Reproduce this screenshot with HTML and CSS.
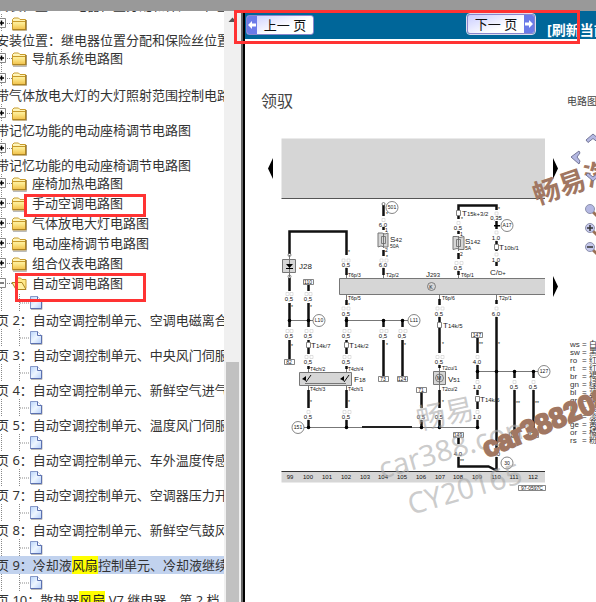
FILE: index.html
```
<!DOCTYPE html>
<html lang="zh-CN">
<head>
<meta charset="utf-8">
<title>电路图</title>
<link rel="stylesheet" href="styles.css">
</head>
<body>
<svg class="defs" aria-hidden="true">
  <defs>
    <linearGradient id="gold" x1="0" y1="0" x2="0" y2="1"><stop offset="0" stop-color="#fffbd0"/><stop offset=".5" stop-color="#fde98c"/><stop offset="1" stop-color="#f0c04a"/></linearGradient>
    <linearGradient id="paper" x1="0" y1="0" x2="1" y2="1"><stop offset="0" stop-color="#b8d4fb"/><stop offset=".5" stop-color="#eef6ff"/><stop offset="1" stop-color="#b4cffa"/></linearGradient>
    <g id="folder"><path d="M13 17.5h13.5V6" fill="none" stroke="#bbb"/><path d="M12.5 15.5v-10l1.5-1.500h4.500l1.500 1.500h5.500v10z" fill="url(#gold)" stroke="#c79a2b"/><path d="M13 7.500h12" stroke="#c79a2b"/><path d="M12.500 16h13.500v-10" fill="none" stroke="#96701a"/></g>
    <g id="closed" ><path d="M1.500 0v20" class="dots"/><path d="M7 9.500h5" class="dots"/><path d="M-3.500 4.500h9v9h-9z" fill="#fff" stroke="#888"/><path d="M-1 9h5M1.500 6.500v5" stroke="#000" stroke-width="1.500"/><use href="#folder"/></g>
    <g id="open"><path d="M1.500 0v20" class="dots"/><path d="M7 9.500h5" class="dots"/><path d="M-3.500 4.500h9v9h-9z" fill="#fff" stroke="#888"/><path d="M-1 9h5" stroke="#000"/><path d="M15.500 14.500v-9l1-1.500h4l1.500 1.500h4v9z" fill="#ffe98a" stroke="#c79a2b"/><path d="M12 8.500h10l4 7h-10z" fill="#fff0a0" stroke="#ad8420"/></g>
    <g id="file"><path d="M1.500 0v17M19.500 0v17" class="dots"/><path d="M20 9h10" class="dots"/><path d="M31 15.500h11V6" fill="none" stroke="#bbb"/><path d="M30.500 2.500h7l4 4v8h-11z" fill="url(#paper)" stroke="#8799c8"/><path d="M37.500 2.500v4h4" fill="#fff" stroke="#5b70b0"/><path d="M30.500 14.500h11v-8" fill="none" stroke="#5b70b0"/></g>
  </defs>
</svg>
<div class="titlebar"></div>
<div class="frames">
  <nav class="tree">
    <ul>
      <li><a class="label" href="#">安装位置<span class="colon">：</span>继电器位置分配和保险丝位置</a></li>
      <li><svg class="node"><use href="#closed"/></svg><a class="label" href="#">安装位置<span class="colon">：</span>继电器位置分配和保险丝位置</a></li>
      <li class="inline"><svg><use href="#closed"/></svg><a href="#">导航系统电路图</a></li>
      <li><svg class="node"><use href="#closed"/></svg><a class="label" href="#">带气体放电大灯的大灯照射范围控制电路图</a></li>
      <li><svg class="node"><use href="#closed"/></svg><a class="label" href="#">带记忆功能的电动座椅调节电路图</a></li>
      <li><svg class="node"><use href="#closed"/></svg><a class="label" href="#">带记忆功能的电动座椅调节电路图</a></li>
      <li class="inline"><svg><use href="#closed"/></svg><a href="#">座椅加热电路图</a></li>
      <li class="inline"><svg><use href="#closed"/></svg><a href="#">手动空调电路图</a></li>
      <li class="inline"><svg><use href="#closed"/></svg><a href="#">气体放电大灯电路图</a></li>
      <li class="inline"><svg><use href="#closed"/></svg><a href="#">电动座椅调节电路图</a></li>
      <li class="inline"><svg><use href="#closed"/></svg><a href="#">组合仪表电路图</a></li>
      <li class="inline"><svg><use href="#open"/></svg><a href="#">自动空调电路图</a></li>
      <li><svg class="node"><use href="#file"/></svg><a class="label" href="#">页 2<span class="colon">：</span>自动空调控制单元、空调电磁离合器</a></li>
      <li><svg class="node"><use href="#file"/></svg><a class="label" href="#">页 3<span class="colon">：</span>自动空调控制单元、中央风门伺服电机</a></li>
      <li><svg class="node"><use href="#file"/></svg><a class="label" href="#">页 4<span class="colon">：</span>自动空调控制单元、新鲜空气进气</a></li>
      <li><svg class="node"><use href="#file"/></svg><a class="label" href="#">页 5<span class="colon">：</span>自动空调控制单元、温度风门伺服电机</a></li>
      <li><svg class="node"><use href="#file"/></svg><a class="label" href="#">页 6<span class="colon">：</span>自动空调控制单元、车外温度传感器</a></li>
      <li><svg class="node"><use href="#file"/></svg><a class="label" href="#">页 7<span class="colon">：</span>自动空调控制单元、空调器压力开关</a></li>
      <li><svg class="node"><use href="#file"/></svg><a class="label" href="#">页 8<span class="colon">：</span>自动空调控制单元、新鲜空气鼓风机</a></li>
      <li><svg class="node"><use href="#file"/></svg><a class="label current" href="#">页 9<span class="colon">：</span>冷却液<mark>风扇</mark>控制单元、冷却液继续</a></li>
      <li><svg class="node"><use href="#file"/></svg><a class="label" href="#">页 10<span class="colon">：</span>散热器<mark>风扇</mark> V7 继电器、第 2 档</a></li>
    </ul>
  </nav>
  <div class="scrollbar"><svg class="up" viewBox="0 0 16 11"><path d="M4.500 11l4-4.500 4 4.500z" fill="#555"/></svg><div class="thumb"></div></div>
  <div class="splitter"></div>
  <main class="viewer">
    <div class="toolbar">
      <button class="pager"><span class="arrow"><svg viewBox="0 0 10 18"><path d="M1 9l4-4v2.500h4v3H5V13z" fill="#fff"/></svg></span><span class="caption">上一 页</span></button>
      <button class="pager next"><span class="caption">下一 页</span><span class="arrow"><svg viewBox="0 0 10 18"><path d="M9 9L5 5v2.500H1v3h4V13z" fill="#fff"/></svg></span></button>
      <a class="refresh" href="#">[刷新当前页]</a>
    </div>
    <div class="sheet">
      <header class="heading"><h1>领驭</h1><span>电路图</span></header>
      <div class="content">
        <svg class="diagram" viewBox="265 115 300 420" role="img" aria-label="电路图">
          <path class="grey" d="M281.500 138.500h263.500v60h-263.500z"/>
          <path d="M281.500 198.500h263.500" stroke="#555"/>
          <path d="M273 158v21l-5-10.500zM553 158v21l5-10.500zM553 276v21l5-10.500z"/>
          <path class="grey edge" d="M545 278.500H339.500v16H545"/>
          <path class="grey edge" d="M282.500 259.500h13v13h-13zM299.500 372.500h52v13h-52zM433.500 371.500h12v13h-12zM378 233h4l3 1 3-1v14h-4l-3-1-3 1zM453 236.500h4l3 1 4-1v13h-4l-3-1-4 1z"/>
          <path class="thin" d="M289 320.500h24M346 320.500h62M304 427.500h173M477 371.500h61M289.500 255v22M383.500 233v15M458.500 236v15M439.500 366v24M346.500 275v4M383.500 275v4M458.500 275v4M346.500 294v6M439.500 294v6M496.500 294v6M308.500 369v4M346.500 369v4M308.500 385v6M346.500 385v6M305 383.500h41"/>
          <path d="M362 427h50" stroke="#222" stroke-width="2"/>
          <path class="wire" d="M289.500 254V231.500H346.500V255M289.500 278v13M308.500 285v6M346.500 268v7M289.500 303v24M308.500 303v24M289.500 340v19M308.500 340v2M308.500 348v6M308.500 366v3M308.500 390v18M308.500 420v7M346.500 300v5M346.500 317v10M346.500 340v2M346.500 348v6M346.500 366v3M346.500 390v18M346.500 420v7M383.500 205v11M383.500 227v3M383.500 250v6M383.500 268v7M383.500 320v7M402.500 320v7M383.500 340v36M402.500 340v36M421.500 392v16M421.500 420v7M439.500 299v6M439.500 317v5M439.500 328v25M439.500 365v3M439.500 390v18M439.500 420v7M458.500 210V205.500H496.500V210M458.500 216v3M458.500 231v3M458.500 253v6M458.500 271v4M496.500 221v8M496.500 241v3M496.500 249v2M496.500 262v4M496.500 300v4M496.500 317v133M496.500 457v13M477.500 338v15M477.500 365v14M477.500 390v5M477.500 402v7M477.500 420v7M514.500 371v7M533.500 371v7M514.500 390v41M533.500 390v41M458.500 438v6M458.500 457v9.500h30l8 4"/>
          <g class="boxes"><path d="M303.500 279.500h10v5h-10zM284.500 359.500h10v5h-10zM378.500 376.500h10v5h-10zM397.500 376.500h10v5h-10zM416.500 387.500h10v5h-10zM471.500 332.500h11v5h-11zM453.500 432.500h10v5h-10zM509.500 432.500h10v5h-10zM528.500 432.500h10v5h-10zM518.500 485.500h27v5h-27zM306.500 342.500h4v5h-4zM344.500 342.500h4v5h-4zM437.500 322.500h4v5h-4zM456.500 210.500h4v5h-4zM494.500 244.500h4v5h-4zM475.500 396.500h4v5h-4zM381.500 236.500h4v7h-4zM456.500 239.500h4v7h-4z"/>
            <circle cx="392" cy="207.500" r="6"/><circle cx="319" cy="320.500" r="6"/><circle cx="414" cy="320.500" r="6"/><circle cx="298" cy="427.500" r="6"/><circle cx="507" cy="225.500" r="6"/><circle cx="544" cy="371.500" r="6"/><circle cx="507" cy="463" r="6"/><circle cx="431.500" cy="286.500" r="4"/><circle cx="439.500" cy="378" r="4"/>
            <circle cx="289.500" cy="255" r="1.500"/><circle cx="289.500" cy="276.500" r="1.500"/><circle cx="383.500" cy="204" r="1.500"/><circle cx="496.500" cy="471" r="1.500"/></g>
          <path class="pale" d="M286 292.500h3v3h-3zM290 292.500h3v3h-3zM305 292.500h3v3h-3zM309 292.500h3v3h-3zM342 259h3v3h-3zM347 259h3v3h-3zM380 259h3v3h-3zM385 259h3v3h-3zM382 218.500h3v3h-3zM342 307h3v3h-3zM347 307h3v3h-3zM436 307h3v3h-3zM441 307h3v3h-3zM495 307h3v3h-3zM286 329.500h3v3h-3zM290 329.500h3v3h-3zM305 329.500h3v3h-3zM310 329.500h3v3h-3zM343 329.500h3v3h-3zM348 329.500h3v3h-3zM380 329.500h3v3h-3zM385 329.500h3v3h-3zM399 329.500h3v3h-3zM404 329.500h3v3h-3zM305 355.500h3v3h-3zM310 355.500h3v3h-3zM343 355.500h3v3h-3zM348 355.500h3v3h-3zM436 355.500h3v3h-3zM441 355.500h3v3h-3zM476 355.500h3v3h-3zM307 410.500h3v3h-3zM343 410.500h3v3h-3zM348 410.500h3v3h-3zM438 410.500h3v3h-3zM476 410.500h3v3h-3zM476 380.500h3v3h-3zM513 380.500h3v3h-3zM532 380.500h3v3h-3zM457 221.500h3v3h-3zM455 261.500h3v3h-3zM460 261.500h3v3h-3zM495 231h3v3h-3zM495 253h3v3h-3zM495 212h3v3h-3z"/>
          <path d="M286 264h7l-3.500 4zM286 268h7v1h-7zM302 379l4-3v5zM340 379l4-3v5zM494 225h6v1.500h-6z"/>
          <path d="M306 382l5-7M344 382l5-7" stroke="#111"/>
          <g><circle cx="289.500" cy="320.500" r="1.800"/><circle cx="308.500" cy="320.500" r="1.800"/><circle cx="346.500" cy="320.500" r="1.800"/><circle cx="383.500" cy="320.500" r="1.800"/><circle cx="402.500" cy="320.500" r="1.800"/><circle cx="308.500" cy="427.500" r="1.800"/><circle cx="346.500" cy="427.500" r="1.800"/><circle cx="421.500" cy="427.500" r="1.800"/><circle cx="439.500" cy="427.500" r="1.800"/><circle cx="477.500" cy="427.500" r="1.800"/><circle cx="477.500" cy="371.500" r="1.800"/><circle cx="496.500" cy="371.500" r="1.800"/><circle cx="514.500" cy="371.500" r="1.800"/><circle cx="533.500" cy="371.500" r="1.800"/></g>
          <g class="value">
            <text x="289" y="301">0,5</text><text x="308" y="301">0,5</text><text x="346" y="267">0,5</text><text x="383" y="227">6,0</text><text x="383" y="267">6,0</text><text x="346" y="316">0,5</text><text x="439" y="316">0,5</text><text x="496" y="316">6,0</text>
            <text x="289" y="338">0,5</text><text x="308" y="338">0,5</text><text x="346" y="338">0,5</text><text x="383" y="338">0,5</text><text x="402" y="338">0,5</text><text x="308" y="364">0,5</text><text x="346" y="364">0,5</text><text x="439" y="364">0,5</text><text x="477" y="364">4,0</text>
            <text x="308" y="419">0,5</text><text x="346" y="419">0,5</text><text x="421" y="419">0,5</text><text x="439" y="419">0,5</text><text x="477" y="419">1,0</text><text x="477" y="389">1,0</text><text x="514" y="389">0,5</text><text x="533" y="389">0,5</text><text x="458" y="456">4,0</text><text x="496" y="456">6,0</text>
            <text x="458" y="230">0,5</text><text x="458" y="270">0,5</text><text x="496" y="220">0,35</text><text x="496" y="240">1,0</text><text x="496" y="262">1,0</text>
          </g>
          <g class="value tag">
            <text x="308" y="284">110</text><text x="289" y="364">82</text><text x="383" y="381">73</text><text x="402" y="381">124</text><text x="421" y="392">71</text><text x="477" y="337">147</text><text x="458" y="437">149</text><text x="514" y="437">112</text><text x="533" y="437">149</text><text x="532" y="490">97-0597C</text>
            <text x="392" y="209">501</text><text x="319" y="322">L10</text><text x="414" y="322">L11</text><text x="298" y="429">151</text><text x="507" y="227">A17</text><text x="544" y="373">127</text><text x="507" y="465">30</text><text x="431" y="289">K</text><text x="439" y="380">M</text>
          </g>
          <g class="pin">
            <text x="348" y="277">T6p/3</text><text x="386" y="277">T2p/2</text><text x="461" y="277">T6p/1</text><text x="348" y="300">T6p/5</text><text x="442" y="300">T6p/6</text><text x="499" y="300">T2p/1</text><text x="310" y="371">T4ch/2</text><text x="348" y="371">T4ch/4</text><text x="310" y="391">T4ch/3</text><text x="348" y="391">T4ch/1</text><text x="442" y="370">T2cu/1</text><text x="442" y="391">T2cu/2</text><text x="390" y="248">50A</text><text x="465" y="250">5A</text><text x="385" y="232">1</text><text x="385" y="252">2</text><text x="460" y="236">1</text><text x="460" y="256">2</text>
          </g>
          <g class="part">
            <text x="299" y="269">J28</text><text x="426" y="277">J<tspan>293</tspan></text><text x="390" y="242">S<tspan>42</tspan></text><text x="465" y="244">S<tspan>142</tspan></text><text x="354" y="382">F<tspan>18</tspan></text><text x="448" y="382">V<tspan>51</tspan></text><text x="311" y="348">T<tspan>14k/7</tspan></text><text x="349" y="348">T<tspan>14k/2</tspan></text><text x="443" y="328">T<tspan>14k/5</tspan></text><text x="480" y="402">T<tspan>14k/6</tspan></text><text x="462" y="216">T<tspan>15k+3/2</tspan></text><text x="499" y="250">T<tspan>10b/1</tspan></text><text x="490" y="275">C/<tspan>D+</tspan></text>
          </g>
          <g class="pin"><text x="291" y="309">*</text><text x="310" y="309">*</text><text x="348" y="254">*</text><text x="386" y="216">*</text><text x="386" y="259">*</text><text x="461" y="221">*</text><text x="498" y="211">*</text><text x="291" y="348">*</text><text x="348" y="307">*</text><text x="386" y="347">*</text><text x="404" y="347">*</text><text x="310" y="404">*</text><text x="348" y="404">*</text><text x="442" y="346">*</text><text x="442" y="404">*</text><text x="479" y="346">**</text><text x="498" y="346">*</text><text x="516" y="405">**</text><text x="535" y="405">**</text><text x="460" y="463">**</text></g>
          <path class="grey" d="M281.500 471h263.500v11.500h-263.500z"/><path d="M281.500 471.500h263.500" stroke="#333"/>
          <g class="track"><text x="290" y="479">99</text><text x="308" y="479">100</text><text x="327" y="479">101</text><text x="346" y="479">102</text><text x="365" y="479">103</text><text x="383" y="479">104</text><text x="402" y="479">105</text><text x="421" y="479">106</text><text x="440" y="479">107</text><text x="458" y="479">108</text><text x="477" y="479">109</text><text x="496" y="479">110</text><text x="514" y="479">111</text><text x="533" y="479">112</text></g>
        </svg>
        <dl class="legend">
          <dt>ws</dt><dd>= 白</dd><dt>sw</dt><dd>= 黑</dd><dt>ro</dt><dd>= 红</dd><dt>rt</dt><dd>= 红</dd><dt>br</dt><dd>= 褐</dd><dt>gn</dt><dd>= 绿</dd><dt>bl</dt><dd>= 蓝</dd><dt>gr</dt><dd>= 灰</dd><dt>li</dt><dd>= 淡</dd><dt>vi</dt><dd>= 淡</dd><dt>ge</dt><dd>= 黄</dd><dt>or</dt><dd>= 橘</dd><dt>rs</dt><dd>= 粉</dd>
        </dl>
      </div>
      <svg class="watermark" viewBox="245 39 351 563">
        <g class="faint"><text transform="translate(419 430) rotate(-12)">畅易</text><text transform="translate(382 479) rotate(-16)">car388.com</text><text transform="translate(411 515) rotate(-16)">CY20165</text></g>
        <g class="strong"><text class="han" transform="translate(537 205) rotate(-19)">畅易汽</text><text class="url" transform="translate(487 458) rotate(-23)">car388208</text></g>
      </svg>
      <div class="tools">
        <svg class="pan" viewBox="570 130 26 60"><g fill="#b4b8e2" stroke="#747798"><path d="M586 140l7-6 7 6-2 2.500-5-4-5 4z"/><path d="M579 151l-8 6 8 7 1-3-3-4 3-4z"/><path d="M586 175l2-2 5 4 5-4 2 2-7 6z"/></g></svg>
        <button class="zoom" aria-label="适合"><svg viewBox="0 0 16 16"><path d="M9 9l5 5" stroke="#997055" stroke-width="3"/><circle cx="6" cy="6" r="4.500" fill="#b4b8e2" stroke="#8d91ad"/></svg></button>
        <button class="zoom" aria-label="放大"><svg viewBox="0 0 16 16"><path d="M9 9l5 5" stroke="#997055" stroke-width="3"/><circle cx="6" cy="6" r="4.500" fill="#c6c9ec" stroke="#8d91ad"/><path d="M3 6h6M6 3v6" stroke="#333" stroke-width="1.500"/></svg></button>
        <button class="zoom" aria-label="缩小"><svg viewBox="0 0 16 16"><path d="M9 9l5 5" stroke="#997055" stroke-width="3"/><circle cx="6" cy="6" r="4.500" fill="#c6c9ec" stroke="#8d91ad"/><path d="M3 6h6" stroke="#333" stroke-width="1.500"/></svg></button>
      </div>
    </div>
  </main>
</div>
<div class="callout pages"></div>
<div class="callout manual"></div>
<div class="callout auto"></div>
</body>
</html>
```
FILE: styles.css
```
* { box-sizing: border-box; }
body {
  margin: 0;
  height: 100vh;
  display: flex;
  flex-direction: column;
  overflow: hidden;
  position: relative;
  background: #fff;
  color: #333;
  font: 13px/18px "Noto Sans", "Noto Sans CJK SC", sans-serif;
}
a { color: inherit; text-decoration: none; }
button { padding: 0; border: 0; background: none; font: inherit; }
svg { display: block; }
.defs { position: absolute; width: 0; height: 0; }
.titlebar { flex: none; height: 11px; background: #999; }
.frames { flex: 1; min-height: 0; display: flex; }

/* Navigation tree */
.tree { flex: none; width: 224px; overflow: hidden; white-space: nowrap; }
.tree ul { list-style: none; margin: -15px 0 0; padding: 0; }
.node { width: 60px; height: 17px; }
.label { display: block; height: 18px; text-indent: -4px; }
.inline { display: flex; height: 20px; }
.inline svg { width: 32px; height: 20px; flex: none; }
.current { background: #c1d2ee; }
.colon { font-family: "Noto Sans CJK TC", sans-serif; line-height: 1; }
mark { background: #ff0; color: #222; }
.dots { fill: none; stroke: #888; stroke-dasharray: 1 1; }

.scrollbar { flex: none; width: 17px; background: #f0f0f0; display: flex; flex-direction: column; }
.up { width: 16px; height: 11px; }
.thumb { width: 13px; margin: 340px 2px 0; flex: 1; background: #c1c1c1; }
.splitter { flex: none; width: 4px; background: linear-gradient(90deg, #666 50%, #000 50%); }

/* Viewer */
.viewer { flex: 1; min-width: 0; display: flex; flex-direction: column; overflow: hidden; }
.toolbar {
  flex: none;
  height: 28px;
  padding: 4px 1px 0;
  display: flex;
  align-items: flex-start;
  background: #069;
  white-space: nowrap;
}
.pager {
  flex: none;
  width: 68px;
  height: 20px;
  display: flex;
  align-items: stretch;
  border: 1px solid #8a86cc;
  border-radius: 3px;
  overflow: hidden;
  background: linear-gradient(160deg, #c9ccff, #fff 60%);
  color: #111;
  font-size: 13px;
}
.next { margin: -1px 12px 0 153px; outline: 1px solid #dde; }
.pager .arrow { width: 10px; background: #6b7be8; }
.pager svg { width: 10px; height: 18px; }
.caption { flex: 1; text-align: center; line-height: 18px; }
.refresh { padding-top: 6px; color: #fff; font-weight: bold; font-size: 14px; }

.sheet { flex: 1; position: relative; overflow: hidden; background: #fff; }
.heading {
  display: flex;
  align-items: center;
  justify-content: space-between;
  height: 76px;
  padding: 48px 0 0 16px;
  width: 352px;
  color: #444;
  font-size: 10px;
}
.heading h1 { margin: 0; font-size: 16px; font-weight: normal; }
.content { display: flex; padding-left: 20px; }
.diagram { flex: none; width: 300px; height: 420px; font-family: "Liberation Sans", sans-serif; }
.grey { fill: #d6d6d6; }
.edge { stroke: #777; }
.thin { fill: none; stroke: #777; }
.wire { fill: none; stroke: #111; stroke-width: 2.500; }
.boxes { fill: none; stroke: #666; stroke-width: 0.800; }
.pale { fill: #fff; stroke: #ccc; stroke-width: 0.600; }
.value { font-size: 6px; text-anchor: middle; fill: #111; }
.tag { font-size: 5px; }
.pin { font-size: 5px; fill: #111; }
.part { font-size: 8px; fill: #222; }
.part tspan { font-size: 6px; }
.track { font-size: 6px; text-anchor: middle; fill: #111; }
.legend {
  flex: none;
  display: grid;
  grid-template-columns: 12px 24px;
  grid-auto-rows: 8px;
  align-content: start;
  margin: 226px 0 0 5px;
  font-family: "Liberation Sans", "Noto Sans CJK SC", sans-serif;
  font-size: 8px;
  line-height: 8px;
}
.legend dd { margin: 0; white-space: nowrap; }

.watermark { position: absolute; left: 0; top: 0; width: 351px; height: 563px; pointer-events: none; font-family: "Noto Sans", "Noto Sans CJK SC", sans-serif; }
.faint { fill: #aaa; fill-opacity: 0.600; font-size: 29px; }
.strong { fill: #a17762; font-weight: bold; }
.han { font-size: 27px; }
.url { font-family: "Liberation Sans", sans-serif; font-size: 28px; stroke: #a17762; stroke-width: 2; }
.tools { position: absolute; right: 0; top: 91px; width: 26px; }
.pan { width: 26px; height: 60px; margin-bottom: 13px; }
.zoom { display: block; width: 16px; height: 16px; margin: 0 0 3px 14px; }

/* Highlight frames over the page */
.callout { position: absolute; border: 3px solid #f33; pointer-events: none; }
.pages { left: 234px; top: 10px; width: 346px; height: 34px; }
.manual { left: 24px; top: 194px; width: 122px; height: 23px; }
.auto { left: 15px; top: 273px; width: 131px; height: 29px; }
```
